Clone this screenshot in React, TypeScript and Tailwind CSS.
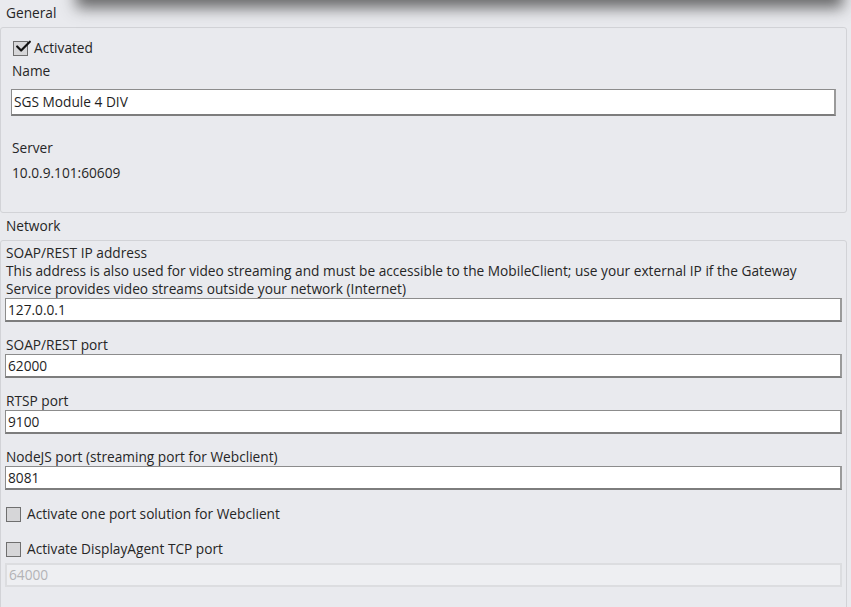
import { Check } from 'lucide-react';

function TextBox({ value, disabled = false }: { value: string; disabled?: boolean }) {
  return (
    <div
      className={
        disabled
          ? 'h-[24px] border-2 border-[#dcdde0] bg-[#eeeff2] pl-[2px] flex items-center text-[#b3b3b6]'
          : 'h-[24px] border border-[#8c8c8c] border-r-2 border-b-2 border-r-[#9a9a9a] border-b-[#7d7d7d] bg-white pl-[2px] flex items-center text-[#1e1e1e]'
      }
    >
      {value}
    </div>
  );
}

function CheckBox({ checked, label }: { checked?: boolean; label: string }) {
  return (
    <div className="flex items-center h-[20px]">
      <div className="w-[15px] h-[15px] border border-[#6f6f6f] bg-[#d6d6d8] flex items-center justify-center relative">
        {checked && <Check size={19} strokeWidth={2.8} className="text-[#111] absolute -top-[5px] left-[0px]" />}
      </div>
      <span className="ml-[6px]">{label}</span>
    </div>
  );
}

export default function App() {
  return (
    <div
      className="w-[851px] h-[607px] bg-[#e9eaee] overflow-hidden relative text-[13.7px] text-[#262626]"
      style={{ fontFamily: '"Open Sans", "Noto Sans", sans-serif' }}
    >
      {/* shadow of the popup above the view */}
      <div className="absolute left-[84px] right-[16px] -top-[40px] h-[40px] bg-[#777] shadow-[0_0_14px_8px_rgba(50,50,50,0.7)]" />

      {/* General */}
      <div className="h-[27px] pl-[6px] flex items-center">General</div>
      <div className="mr-[4px] h-[186px] border border-[#d2d3d7] rounded-[3px] pt-[10px]">
        <div className="pl-[12px]">
          <CheckBox checked label="Activated" />
        </div>
        <div className="pl-[11px] mt-[3px] h-[20px] flex items-center">Name</div>
        <div className="px-[10px] mt-[8px]">
          <div className="h-[27px] border border-[#8c8c8c] border-r-2 border-b-2 border-r-[#9a9a9a] border-b-[#7d7d7d] bg-white pl-[2px] flex items-center text-[#1e1e1e]">
            SGS Module 4 DIV
          </div>
        </div>
        <div className="pl-[11px] mt-[22px] h-[20px] flex items-center">Server</div>
        <div className="pl-[11px] mt-[5px] h-[20px] flex items-center">10.0.9.101:60609</div>
      </div>

      {/* Network */}
      <div className="h-[27px] pl-[6px] flex items-center">Network</div>
      <div className="mr-[4px] h-[400px] border border-[#d2d3d7] rounded-[3px] pt-[3px] px-[4px] leading-[18px]">
        <div className="pl-[1px]">SOAP/REST IP address</div>
        <div className="pl-[1px]">
          This address is also used for video streaming and must be accessible to the MobileClient; use your external IP if the Gateway
          Service provides video streams outside your network (Internet)
        </div>
        <TextBox value="127.0.0.1" />

        <div className="pl-[1px] mt-[14px]">SOAP/REST port</div>
        <TextBox value="62000" />

        <div className="pl-[1px] mt-[14px]">RTSP port</div>
        <TextBox value="9100" />

        <div className="pl-[1px] mt-[14px]">NodeJS port (streaming port for Webclient)</div>
        <TextBox value="8081" />

        <div className="mt-[14px] pl-[1px]">
          <CheckBox label="Activate one port solution for Webclient" />
        </div>
        <div className="mt-[15px] pl-[1px]">
          <CheckBox label="Activate DisplayAgent TCP port" />
        </div>
        <div className="mt-[4px]">
          <TextBox value="64000" disabled />
        </div>
      </div>
    </div>
  );
}
